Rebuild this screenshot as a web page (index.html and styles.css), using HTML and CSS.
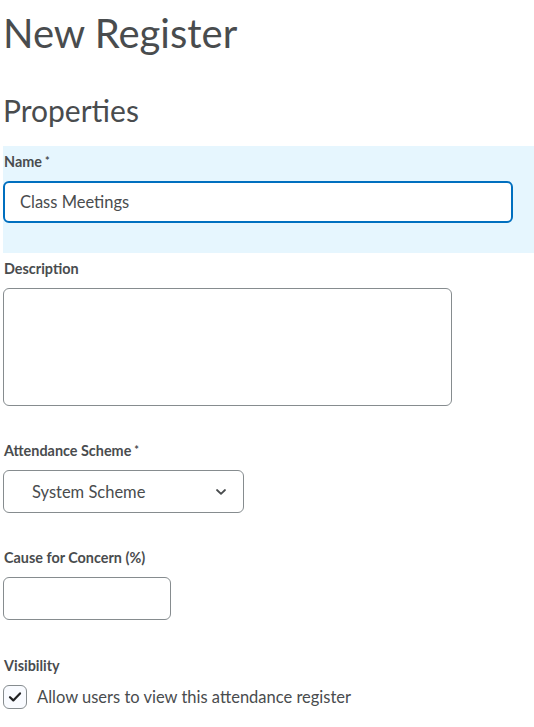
FILE: index.html
```html
<!DOCTYPE html>
<html lang="en">
<head>
<meta charset="utf-8">
<title>New Register</title>
<link rel="stylesheet" href="styles.css">
</head>
<body>
<main class="page">
  <h1 class="title">New Register</h1>
  <h2 class="subtitle">Properties</h2>

  <section class="field field-highlight">
    <label class="label" for="name">Name<span class="req">*</span></label>
    <input id="name" class="input input-focus" type="text" value="Class Meetings">
  </section>

  <section class="field">
    <label class="label" for="desc">Description</label>
    <textarea id="desc" class="textarea"></textarea>
  </section>

  <section class="field field-spaced">
    <label class="label">Attendance Scheme<span class="req">*</span></label>
    <div class="select">
      <span class="select-text">System Scheme</span>
      <svg class="chevron" width="12" height="8" viewBox="0 0 12 8"><path d="M2 2 L6 5.8 L10 2" fill="none" stroke="#494c4e" stroke-width="1.8" stroke-linecap="round" stroke-linejoin="round"/></svg>
    </div>
  </section>

  <section class="field field-spaced">
    <label class="label" for="cfc">Cause for Concern (%)</label>
    <input id="cfc" class="input input-small" type="text">
  </section>

  <section class="field field-spaced field-last">
    <div class="label">Visibility</div>
    <div class="check-row">
      <span class="checkbox">
        <svg width="14" height="12" viewBox="0 0 14 12"><path d="M2 6.2 L5.3 9.4 L12 2.4" fill="none" stroke="#202122" stroke-width="2.2" stroke-linecap="round" stroke-linejoin="round"/></svg>
      </span>
      <span class="check-text">Allow users to view this attendance register</span>
    </div>
  </section>
</main>
</body>
</html>
```

FILE: styles.css
```css
* { box-sizing: border-box; }
html, body { margin: 0; padding: 0; background: #ffffff; }
body {
  font-family: Lato, "Open Sans", sans-serif;
  color: #494c4e;
}
.page {
  padding-left: 3px;
  display: flex;
  flex-direction: column;
}
.title {
  margin: 9px 0 0 0;
  font-size: 40px;
  font-weight: 400;
  line-height: 48px;
  color: #494c4e;
}
.subtitle {
  margin: 35px 0 0 0;
  font-size: 30px;
  font-weight: 400;
  line-height: 36px;
  color: #494c4e;
}
.field {
  display: flex;
  flex-direction: column;
  align-items: flex-start;
  padding: 8px 0 0 0;
}
.field-spaced { margin-top: 29px; }
.field-last { margin-top: 30px; }
.field-highlight {
  margin-top: 18px;
  background: #e6f6fe;
  padding: 8px 0 30px 0;
}
.label {
  font-size: 14.4px;
  font-weight: 700;
  line-height: 16px;
  color: #494c4e;
  padding-left: 1px;
  margin-bottom: 11px;
}
.req {
  font-size: 11px;
  margin-left: 3px;
  vertical-align: top;
  position: relative;
  top: -1px;
}
.input {
  font-family: Lato, sans-serif;
  font-size: 16.5px;
  color: #494c4e;
  height: 42px;
  border: 1px solid #868c8f;
  border-radius: 6px;
  background: #fff;
  padding: 0 15px;
  outline: none;
}
.input-focus {
  width: 510px;
  border: 2px solid #006fbf;
}
.input-small { width: 168px; height: 43px; }
.textarea {
  width: 449px;
  height: 118px;
  border: 1px solid #868c8f;
  border-radius: 6px;
  resize: none;
  background: #fff;
  outline: none;
  margin: 0;
  display: block;
}
.select {
  width: 241px;
  height: 43px;
  border: 1px solid #868c8f;
  border-radius: 6px;
  display: flex;
  align-items: center;
  justify-content: space-between;
  padding: 0 16px 0 28px;
  font-size: 16.5px;
}
.check-row {
  display: flex;
  align-items: center;
  gap: 10px;
}
.checkbox {
  width: 24px;
  height: 24px;
  border: 1px solid #868c8f;
  border-radius: 6px;
  background: #f9fbff;
  display: flex;
  align-items: center;
  justify-content: center;
}
.check-text { font-size: 16.5px; }
```
